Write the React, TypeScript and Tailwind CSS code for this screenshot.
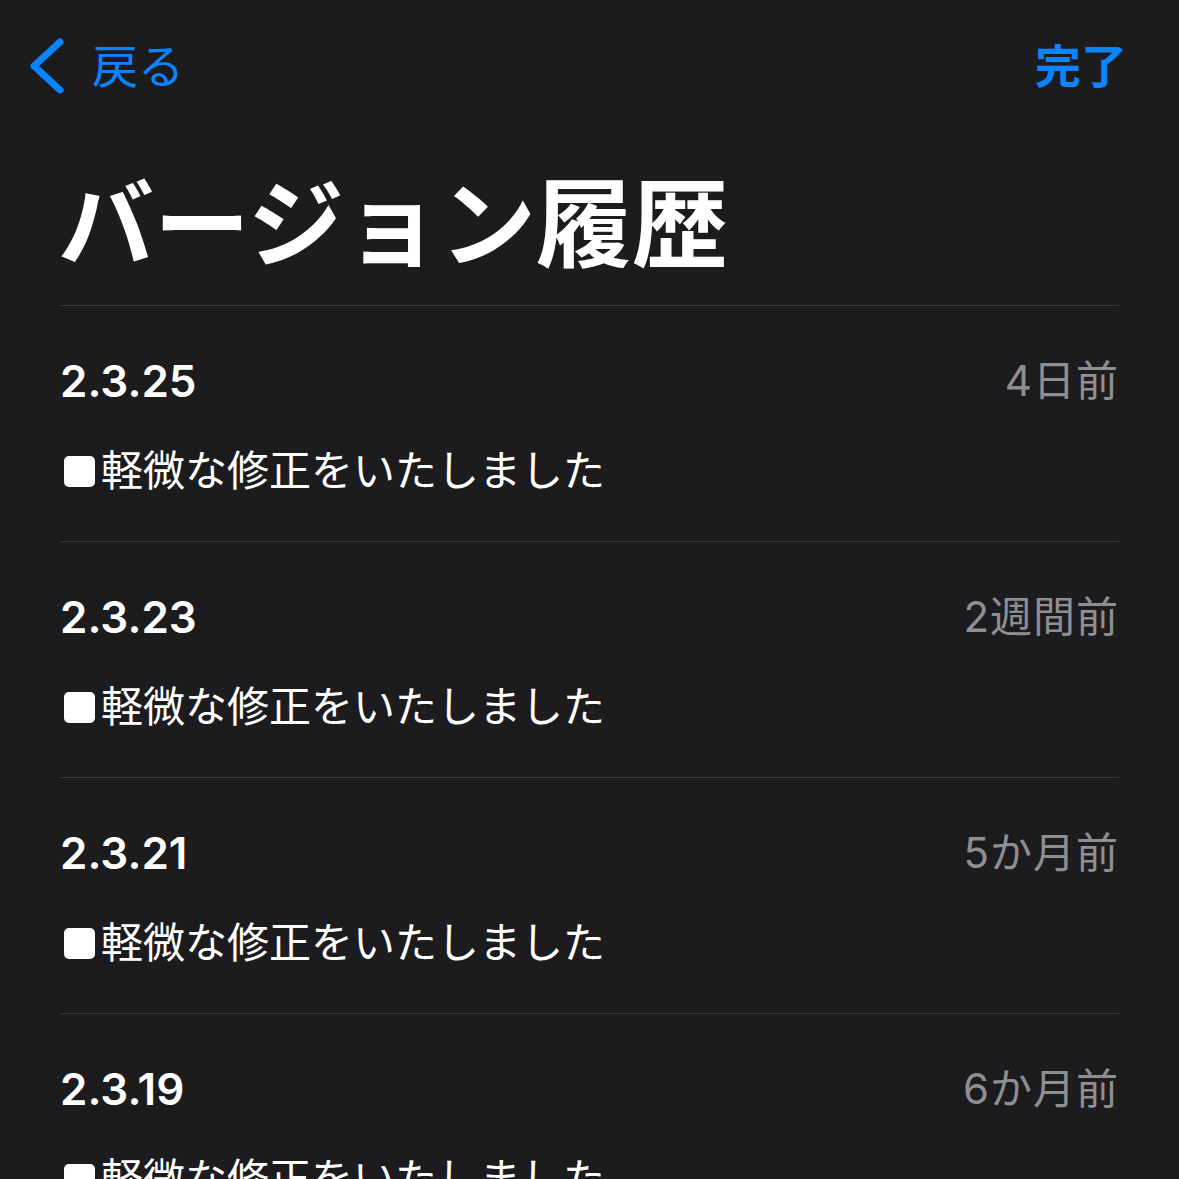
const releases = [
  { version: '2.3.25', ago: '4日前', note: '軽微な修正をいたしました' },
  { version: '2.3.23', ago: '2週間前', note: '軽微な修正をいたしました' },
  { version: '2.3.21', ago: '5か月前', note: '軽微な修正をいたしました' },
  { version: '2.3.19', ago: '6か月前', note: '軽微な修正をいたしました' },
]

const font = { fontFamily: 'Inter, "Noto Sans CJK JP", sans-serif' }

export default function App() {
  return (
    <div className="w-[1179px] h-[1179px] overflow-hidden bg-[#1c1c1e] text-white" style={font}>
      {/* ナビゲーションバー */}
      <div className="flex items-center justify-between h-[132px] pl-[26px] pr-[52px]">
        <div className="flex items-center gap-[26px] text-[#0a84ff]">
          <svg width="40" height="60" viewBox="0 0 40 60" fill="none">
            <path d="M34 6 L8 30 L34 54" stroke="#0a84ff" strokeWidth="7" strokeLinecap="round" strokeLinejoin="round" />
          </svg>
          <span className="text-[46px] leading-none">戻る</span>
        </div>
        <span className="text-[46px] leading-none font-semibold text-[#0a84ff]">完了</span>
      </div>

      {/* タイトル */}
      <div className="px-[60px]">
        <h1 className="text-[96px] font-bold leading-none pt-[44px] pb-[33px] -ml-[2px]">バージョン履歴</h1>

        <div>
          {releases.map((r) => (
            <div key={r.version} className="border-t border-[#38383a] pt-[49px] pb-[44px]">
              <div className="flex items-center justify-between h-[52px]">
                <span className="text-[44px] font-semibold leading-none">{r.version}</span>
                <span className="text-[42px] leading-none text-[#8e8e93] tracking-[1px]">{r.ago}</span>
              </div>
              <p className="mt-[38px] h-[52px] flex items-center text-[42px] leading-none">
                <span className="inline-block w-[31px] h-[31px] rounded-[5px] bg-white ml-[4px] mr-[6px]" />
                {r.note}
              </p>
            </div>
          ))}
        </div>
      </div>
    </div>
  )
}
